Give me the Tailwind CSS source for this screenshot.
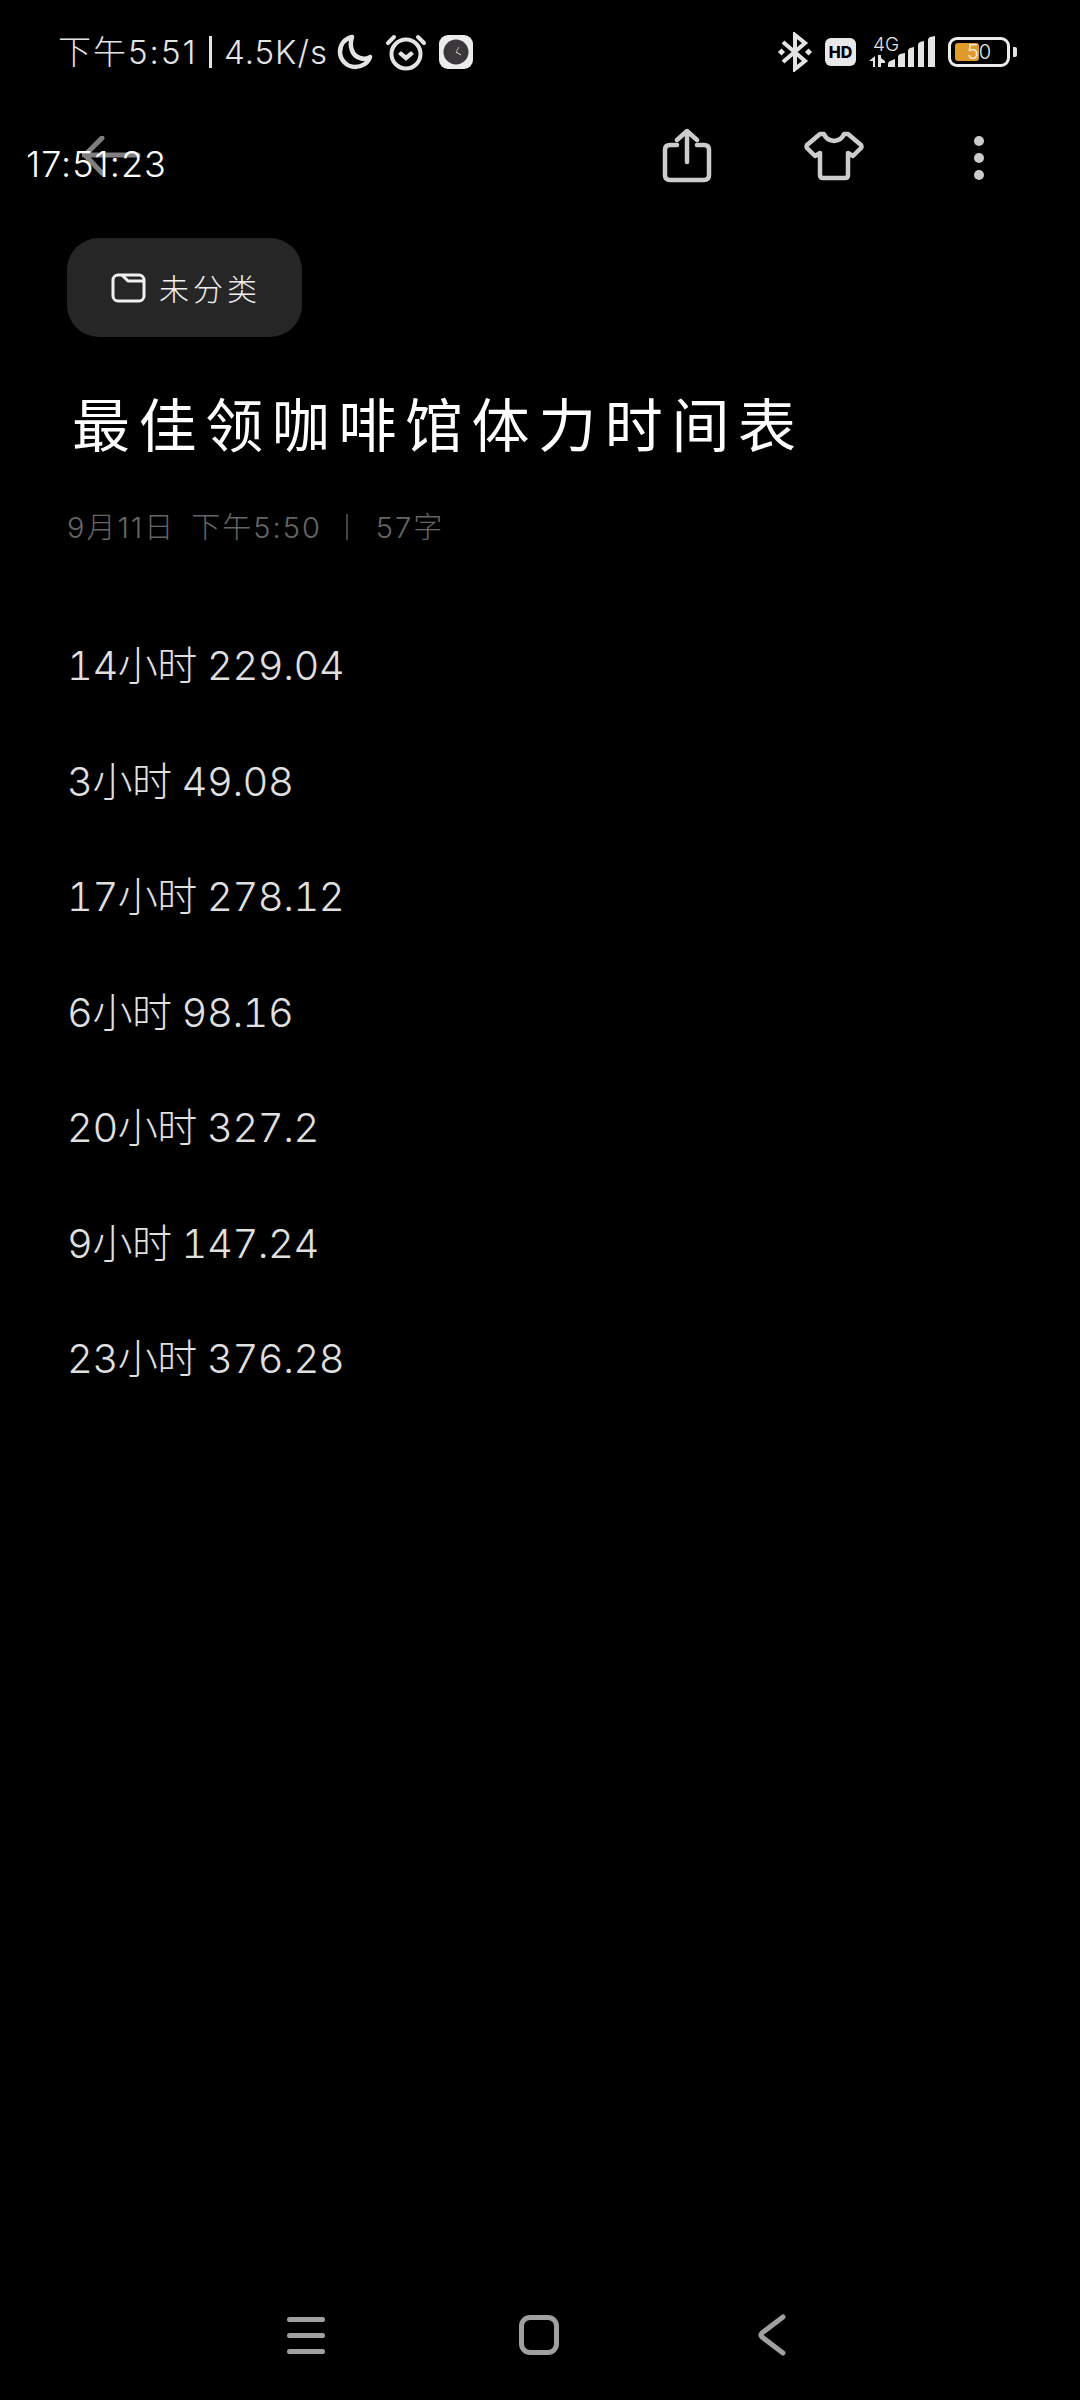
<!DOCTYPE html>
<html lang="zh-CN">

<head>
	<meta charset="UTF-8">
	<meta name="viewport" content="width=device-width, initial-scale=1.0">
	<title>最佳领咖啡馆体力时间表</title>
	<script src="https://cdn.jsdelivr.net/npm/@tailwindcss/browser@4"></script>
</head>

<body class="bg-black">
	<div class="relative w-[1080px] h-[2400px] flex flex-col bg-black overflow-hidden font-['Inter','Noto_Sans_CJK_SC',sans-serif]">

		<!-- status bar -->
		<div class="h-[104px] flex items-center pl-[58px] text-[#e4e4e4] font-light">
			<span class="text-[33px] leading-none tracking-[2px] whitespace-nowrap w-[139px]">下午5:51</span>
			<span class="w-[3px] h-[32px] bg-[#e4e4e4] ml-[12px]"></span>
			<span class="text-[33px] leading-none tracking-[1px] ml-[12px] w-[104px] whitespace-nowrap">4.5K/s</span>
			<svg class="ml-[9px] w-[36px] h-[36px]" viewBox="0 0 36 36" fill="none" stroke="#e4e4e4" stroke-width="4.5" stroke-linejoin="round">
				<path d="M15 3C7 5 3 11 3 18c0 8 7 15 15 15 7 0 13-4 15-10-3 2-7 2-10 1C15 22 12 12 15 3Z" />
			</svg>
			<svg class="ml-[12px] w-[42px] h-[40px]" viewBox="0 0 42 40" fill="none" stroke="#e4e4e4" stroke-linecap="round">
				<circle cx="21" cy="22" r="14.5" stroke-width="4" />
				<path d="M14 22l2-2 5 4 5-4 2 2-7 6z" fill="#e4e4e4" stroke-width="1.5" stroke-linejoin="round" />
				<path d="M3 11 9 5M39 11l-6-6" stroke-width="4" />
			</svg>
			<div class="ml-[12px] w-[34px] h-[34px] rounded-[9px] bg-[#ececec] flex items-center justify-center">
				<svg class="w-[26px] h-[26px]" viewBox="0 0 26 26" fill="none">
					<circle cx="13" cy="13" r="12.5" fill="#3a383a" />
					<path d="M13 13 18 16" stroke="#e8e8e8" stroke-width="1" />
					<path d="M13 13 16 8" stroke="#d8a0a0" stroke-width="1" />
				</svg>
			</div>

			<svg class="ml-auto w-[38px] h-[40px]" viewBox="0 0 38 40" fill="none" stroke="#e4e4e4" stroke-width="4">
				<path d="M7 10 29 29 19 37V3l10 8L7 30" stroke-linejoin="miter" />
				<path d="M3 20l2.500-2.500L8 20l-2.500 2.500zM30 20l2.500-2.500L35 20l-2.500 2.500z" fill="#e4e4e4" stroke-width="1.500" />
			</svg>
			<div class="ml-[11px] w-[31px] h-[28px] rounded-[6px] bg-[#e8e8e8] flex items-center justify-center text-black text-[16px] leading-none font-extrabold">HD</div>

			<div class="ml-[13px] relative w-[80px] h-[34px]">
				<span class="absolute left-[4px] top-[0px] text-[19px] leading-none font-light">4G</span>
				<svg class="absolute left-0 top-0 w-[80px] h-[34px]" viewBox="0 0 80 34" fill="#e4e4e4">
					<path d="M0 26l6-5v11H4v-6zM9 20h3v3l4 3v2h-4v4H9z" />
					<path d="M19 32v-3q0-2 2-3l5-2v8ZM29 32V22q0-2 2-3l5-1v14ZM39 32V16q0-2 2-3l4-1v20ZM49 32V10q0-2 2-3l4-1v26ZM59 32V5q0-2 2-3l5-1v31Z" />
				</svg>
			</div>
			<div class="ml-[-1px] relative w-[62px] h-[30px] rounded-[9px] border-[3px] border-[#ececec]">
				<div class="absolute left-[4px] top-[3px] w-[24px] h-[18px] rounded-[3px] bg-[#e09a2b]"></div>
				<span class="absolute left-[16px] top-[1px] text-[20px] leading-[22px] font-light text-[#eee]">50</span>
			</div>
			<div class="ml-[3px] mr-[63px] w-[4px] h-[10px] rounded-r-[2px] bg-[#e4e4e4]"></div>
		</div>

		<!-- toolbar -->
		<div class="h-[104px] flex items-center">
			<svg class="ml-[82px] w-[60px] h-[40px]" viewBox="0 0 60 40" fill="none" stroke="#7f7f7f" stroke-width="5" stroke-linecap="round">
				<path d="M2 19H56M20 2 3 19l17 18" />
			</svg>
			<svg class="ml-[520px] w-[50px] h-[56px]" viewBox="0 0 50 56" fill="none" stroke="#cccccc" stroke-width="4.500" stroke-linecap="round" stroke-linejoin="round">
				<path d="M25 34V4M15 12l10-9 10 9" />
				<path d="M15 17H8q-5 0-5 5v25q0 5 5 5h34q5 0 5-5V22q0-5-5-5H35" />
			</svg>
			<svg class="ml-[92px] w-[60px] h-[50px]" viewBox="0 0 60 50" fill="none" stroke="#cccccc" stroke-width="4.500" stroke-linejoin="round">
				<path d="M20 3h-4L3 14q-1 2 0 3l8 8 5-3v22q0 3 3 3h22q3 0 3-3V22l5 3 8-8q1-1 0-3L44 3h-4q-2 6-10 7-8-1-10-7Z" />
			</svg>
			<div class="ml-[110px] mt-[3px] flex flex-col gap-[7px]">
				<div class="w-[10px] h-[10px] rounded-full bg-[#cccccc]"></div>
				<div class="w-[10px] h-[10px] rounded-full bg-[#cccccc]"></div>
				<div class="w-[10px] h-[10px] rounded-full bg-[#cccccc]"></div>
			</div>
		</div>

		<!-- note -->
		<div class="pl-[67px] pt-[30px]">
			<div class="w-[235px] h-[99px] rounded-[32px] bg-[#262626] flex items-center pl-[44px]">
				<svg class="w-[35px] h-[30px]" viewBox="0 0 35 30" fill="none" stroke="#f0f0f0" stroke-width="3" stroke-linejoin="round">
					<rect x="2" y="2" width="31" height="26" rx="5" />
					<path d="M11 2l6 6h16" />
				</svg>
				<span class="ml-[13px] mb-[2px] text-[30px] leading-none tracking-[4px] text-[#f0f0f0] font-['Noto_Sans_CJK_SC',sans-serif] font-light whitespace-nowrap">未分类</span>
			</div>

			<h1 class="mt-[50px] ml-[5px] text-[58px] leading-[70px] tracking-[8.600px] text-white font-['Noto_Sans_CJK_SC',sans-serif] font-normal whitespace-nowrap">最佳领咖啡馆体力时间表</h1>

			<div class="mt-[52px] flex items-center h-[36px] text-[29px] leading-none tracking-[2px] text-[#666666] font-light whitespace-nowrap">
				<span>9月11日</span>
				<span class="ml-[16px]">下午5:50</span>
				<span class="ml-[24px] w-[2px] h-[26px] bg-[#444444]"></span>
				<span class="ml-[28px]">57字</span>
			</div>

			<div class="mt-[63px] flex flex-col text-[40px] leading-[115.5px] tracking-[-0.500px] tabular-nums text-[#e0e0e0] font-light">
				<p>14小时 229.04</p>
				<p>3小时 49.08</p>
				<p>17小时 278.12</p>
				<p>6小时 98.16</p>
				<p>20小时 327.2</p>
				<p>9小时 147.24</p>
				<p>23小时 376.28</p>
			</div>
		</div>

		<!-- nav bar -->
		<div class="mt-auto mb-[44px] flex items-center h-[42px] pl-[287px]">
			<div class="flex flex-col gap-[11px]">
				<div class="w-[38px] h-[5px] rounded-full bg-[#a0a0a0]"></div>
				<div class="w-[38px] h-[5px] rounded-full bg-[#a0a0a0]"></div>
				<div class="w-[38px] h-[5px] rounded-full bg-[#a0a0a0]"></div>
			</div>
			<div class="ml-[194px] w-[40px] h-[40px] rounded-[11px] border-[5px] border-[#a0a0a0]"></div>
			<svg class="ml-[199px] w-[28px] h-[42px]" viewBox="0 0 28 42" fill="none" stroke="#a0a0a0" stroke-width="5" stroke-linecap="round" stroke-linejoin="round">
				<path d="M25 3 4 19q-2 2 0 4l21 16" />
			</svg>
		</div>

		<!-- floating clock -->
		<span class="absolute left-[26px] top-[144px] text-[36px] leading-[40px] tracking-[1px] text-white font-light">17:51:23</span>
	</div>
</body>

</html>
